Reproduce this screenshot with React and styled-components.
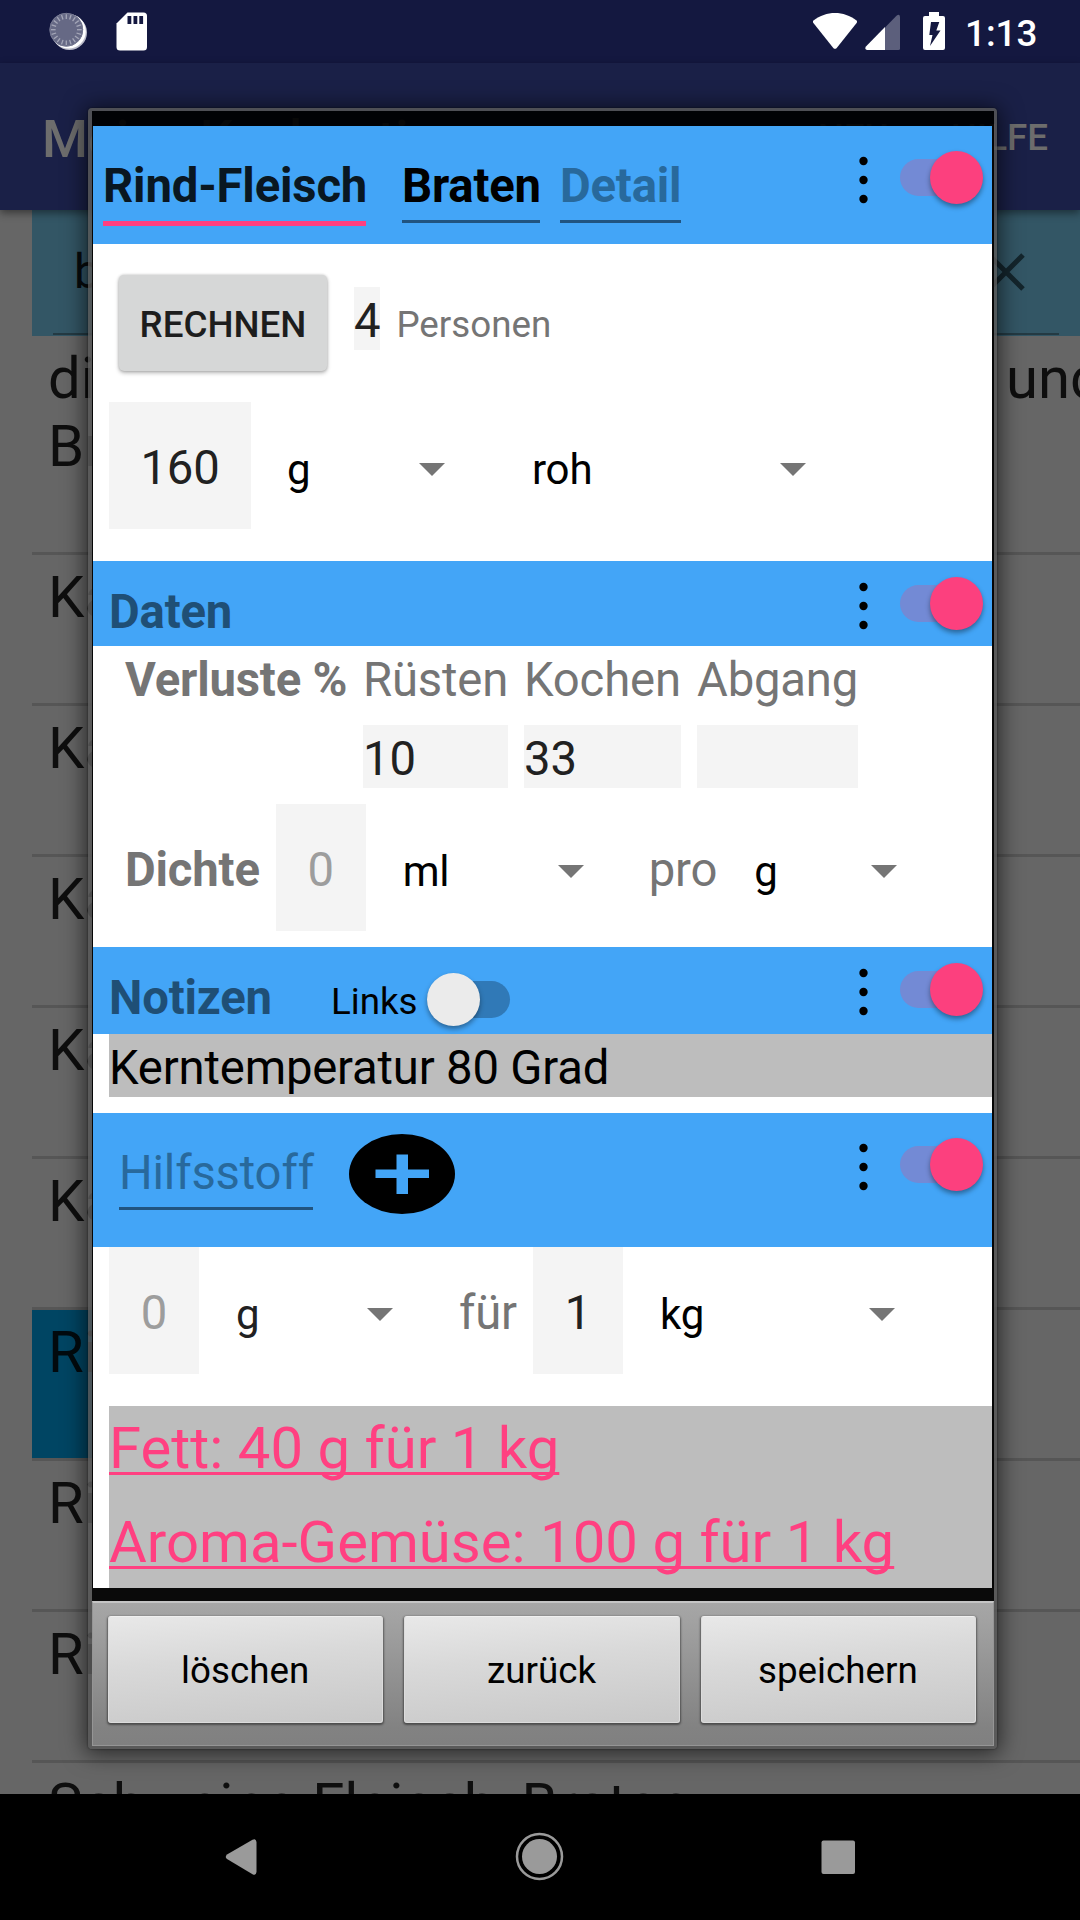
import React from "react";
import styled, { createGlobalStyle, css } from "styled-components";

const GlobalStyle = createGlobalStyle`
  html, body { margin: 0; padding: 0; background: #000; }
  body { font-family: Roboto, "Noto Sans", sans-serif; width: 1080px; height: 1920px; overflow: hidden; }
  *, *::before, *::after { box-sizing: border-box; }
`;

const BLUE = "#43a5f7";
const PINK = "#ff4081";

/* ---------- type ---------- */
const sizes = {
  button: css`font-size: 36.75px; line-height: 43px;`,
  spinner: css`font-size: 42px; line-height: 49px; letter-spacing: -0.2px;`,
  body: css`font-size: 47.25px; line-height: 56px; letter-spacing: -0.18px;`,
  title: css`font-size: 52.5px; line-height: 62px;`,
  large: css`font-size: 58px; line-height: 68px; letter-spacing: 0.03px;`,
};

const Text = styled.span`
  ${(p) => sizes[p.$size || "body"]}
  font-weight: ${(p) => p.$weight || 400};
  color: ${(p) => p.$color || "#000"};
  white-space: nowrap;
  margin-left: ${(p) => p.$ml || 0}px;
`;

/* ---------- screen ---------- */
const Screen = styled.div`
  position: relative;
  display: flex;
  flex-direction: column;
  width: 1080px;
  height: 1920px;
  overflow: hidden;
  background: #666;
`;

const StatusBar = styled.div`
  display: flex;
  flex: none;
  height: 63px;
  background: #141840;
`;

const Clock = styled.span`
  font-size: 36.75px;
  line-height: 43px;
  font-weight: 500;
  color: #fff;
  margin: 12px 0 0 19px;
`;

const AppBar = styled.header`
  position: relative;
  z-index: 1;
  display: flex;
  flex: none;
  justify-content: space-between;
  align-items: flex-start;
  height: 147px;
  padding: 45px 32px 0 42px;
  background: #1a2047;
  box-shadow: 0 3px 8px rgba(0, 0, 0, 0.45);
`;

const Actions = styled.div`
  display: flex;
  gap: 62px;
  padding-top: 8px;
`;

const SearchBox = styled.div`
  display: flex;
  flex: none;
  height: 126px;
  margin-left: 32px;
  padding: 0 21px 1px;
  background: #335665;
`;

const SearchField = styled.div`
  display: flex;
  flex: 1;
  justify-content: space-between;
  align-items: center;
  padding: 0 33px 0 21px;
  border-bottom: 2px solid #243a43;
`;

const List = styled.div`
  flex: 1;
  min-height: 0;
  overflow: hidden;
  padding-left: 32px;
`;

const ListItem = styled.div`
  display: flex;
  height: ${(p) => p.$height || 151}px;
  border-bottom: 3px solid #565656;
`;

const ItemLabel = styled.div`
  display: flex;
  flex-direction: column;
  flex: none;
  width: 960px;
  padding: 8px 0 0 16px;
  background: ${(p) => (p.$selected ? "#004563" : "transparent")};
  ${ListItem}:last-child & { padding-top: 7px; }
`;

const ItemTail = styled.div`
  padding-top: 8px;
  margin-left: 14px;
`;

const NavBar = styled.nav`
  display: flex;
  flex: none;
  height: 126px;
  background: #000;
`;

/* ---------- dialog ---------- */
const Dialog = styled.section`
  position: absolute;
  z-index: 2;
  left: 88px;
  top: 108px;
  width: 909px;
  height: 1641px;
  display: flex;
  flex-direction: column;
  border: solid rgba(88, 88, 88, 0.85);
  border-width: 3px 3px 3px 4px;
  border-radius: 4px;
  box-shadow: 0 2px 22px 3px rgba(0, 0, 0, 0.6), 0 0 2px rgba(0, 0, 0, 0.6);
`;

const TopStrip = styled.div`
  flex: none;
  height: 15px;
  background: rgba(0, 0, 0, 0.93);
`;

const Content = styled.div`
  display: flex;
  flex-direction: column;
  flex: none;
  height: 1462px;
  border: solid #060606;
  border-width: 0 2px 0 1px;
  background: #fff;
`;

const Divider = styled.div`
  flex: none;
  height: 13px;
  background: #0a0a0a;
`;

const SectionHeader = styled.div`
  display: flex;
  flex: none;
  align-items: flex-start;
  height: ${(p) => p.$height}px;
  background: ${BLUE};
`;

const HeaderMain = styled.div`
  display: flex;
  align-items: baseline;
  padding: ${(p) => p.$top}px 0 0 ${(p) => p.$left}px;
`;

const Field = styled.div`
  width: ${(p) => p.$width}px;
  height: ${(p) => (p.$active ? 68 : 65)}px;
  margin-right: ${(p) => p.$mr || 0}px;
  border-bottom: ${(p) => (p.$active ? `5px solid ${PINK}` : "3px solid #215480")};
  white-space: nowrap;
`;

const Controls = styled.div`
  display: flex;
  align-items: center;
  gap: 32.5px;
  margin: ${(p) => p.$top}px 9px 0 auto;
`;

const Track = styled.div`
  position: relative;
  width: 83px;
  height: 37px;
  border-radius: 19px;
  background: ${(p) => (p.$on ? "#738ad5" : "#3079b7")};
  &::after {
    content: "";
    position: absolute;
    top: -8px;
    ${(p) => (p.$on ? "right: 0;" : "left: 0;")}
    width: 53px;
    height: 53px;
    border-radius: 50%;
    background: ${(p) => (p.$on ? "#fc407e" : "#ebebeb")};
    box-shadow: 0 3px 5px rgba(0, 0, 0, 0.38);
  }
`;

const LinksSwitch = styled.div`
  display: flex;
  align-items: center;
  gap: 9px;
  margin-left: 59px;
  ${Track} { margin-bottom: 4px; }
`;

const Row = styled.div`
  display: flex;
  flex: none;
  align-items: baseline;
  height: ${(p) => p.$height}px;
  padding: ${(p) => p.$top || 0}px 0 0 ${(p) => p.$left || 16}px;
`;

const RaisedButton = styled.button`
  width: 208px;
  height: 96px;
  padding: 3px 0 0;
  border: 0;
  border-radius: 5px;
  background: #d6d7d7;
  box-shadow: 0 2px 4px rgba(0, 0, 0, 0.28), 0 0 3px rgba(0, 0, 0, 0.2);
  font: 500 36.75px/43px Roboto, sans-serif;
  color: #1d1d1d;
`;

const SmallBox = styled.div`
  height: 63px;
  margin-left: ${(p) => p.$ml || 0}px;
  padding-top: 6px;
  background: #f4f4f4;
`;

const AmountBox = styled.div`
  flex: none;
  width: ${(p) => p.$width}px;
  height: 127px;
  margin-left: ${(p) => p.$ml || 0}px;
  padding-top: 38px;
  text-align: center;
  background: #f4f4f4;
`;

const SpinnerBox = styled.div`
  display: flex;
  flex: none;
  align-items: center;
  justify-content: space-between;
  width: ${(p) => p.$width}px;
  margin-left: ${(p) => p.$ml}px;
`;

const LossTable = styled.div`
  display: grid;
  flex: none;
  grid-template-columns: 222px 145px 157px 161px;
  grid-template-rows: 56px 63px;
  column-gap: 16px;
  row-gap: 17px;
  height: 158px;
  padding: 6px 0 0 32px;
`;

const Note = styled.div`
  flex: none;
  height: 63px;
  margin: 0 0 16px 16px;
  padding-top: 6px;
  background: #bdbdbd;
`;

const Ingredients = styled.ul`
  flex: none;
  height: 182px;
  margin: 0 0 0 16px;
  padding: 8px 0 0;
  list-style: none;
  background: #bdbdbd;
`;

const Ingredient = styled.li`
  ${sizes.large}
  height: 94px;
  color: ${PINK};
  text-decoration: underline;
  text-decoration-thickness: 3px;
  text-underline-offset: 4px;
  text-decoration-skip-ink: none;
`;

const ButtonBar = styled.footer`
  display: flex;
  flex: 1;
  gap: 21px;
  align-items: flex-start;
  padding: 13px 17px 0 15px;
  border: 1px solid #959595;
  border-top: 2px solid #c4c4c4;
  background: linear-gradient(#a6a6a6, #a2a2a2 12%, #828282 88%, #808080);
`;

const DialogButton = styled.button`
  flex: 1;
  height: 107px;
  padding: 1px 1px 0 0;
  border: 1px solid #dcdcdc;
  border-top-color: #f0f0f0;
  border-radius: 3px;
  background: linear-gradient(175deg, #e8e8e8, #d9d9d9 40%, #c8c8c8);
  box-shadow: 0 1px 2px 1px rgba(0, 0, 0, 0.42);
  font: 400 36.75px/43px Roboto, sans-serif;
  color: #000;
`;

/* ---------- icons ---------- */
const rays = Array.from({ length: 20 }, (_, i) => i * 18);

const LeftStatusIcons = () => (
  <svg width="800" height="63" viewBox="0 0 800 63">
    <circle cx="69.500" cy="32.500" r="17.500" fill="#b9bac8" />
    <circle cx="68.500" cy="31.300" r="17.300" fill="#fff" />
    <circle cx="66.300" cy="29.700" r="16.800" fill="#666985" />
    <circle cx="66.300" cy="29.700" r="16.400" fill="none" stroke="#777a93" strokeWidth="1" />
    {rays.map((a) => (
      <line key={a} x1="66.300" y1="14.300" x2="66.300" y2="19" stroke="#a5a7b8" strokeWidth="1.300" transform={`rotate(${a} 66.3 29.7)`} />
    ))}
    <path fill="#fff" d="M127.500 12.500H143.500a3.500 3.500 0 0 1 3.500 3.500V47a3.500 3.500 0 0 1-3.500 3.500H120a3.500 3.500 0 0 1-3.500-3.500V23.500Z" />
    <path fill="#141840" d="M127.500 16h3.800v8h-3.800ZM133.500 16h3.800v8h-3.800ZM139.300 16h3.800v8h-3.800Z" />
  </svg>
);

const RightStatusIcons = () => (
  <svg width="146" height="63" viewBox="800 0 146 63">
    <path fill="#fff" d="M813.500 20.500C826 10.500 844 10.500 856.500 20.500Q857.500 21.500 856.800 22.800L836.500 48.200Q835 49.500 833.500 48.200L813.200 22.800Q812.500 21.500 813.500 20.500Z" />
    <path fill="#5c5f7c" d="M885 27.500 896.500 15.700Q899.800 13.500 900 17V48.500Q900 50 898.500 50H885Z" />
    <path fill="#fff" d="M885 27V50H867Q864.500 49.500 865.700 46.800Z" />
    <path fill="#fff" d="M929 12h10v4h4a2 2 0 0 1 2 2V48a2 2 0 0 1-2 2H925a2 2 0 0 1-2-2V18a2 2 0 0 1 2-2h4Z" />
    <path fill="#141840" d="M931 22H939.300L936.300 30.500H940.500L930 46 932.500 35H929.300Z" />
  </svg>
);

const CloseIcon = () => (
  <svg width="40" height="40" viewBox="0 0 40 40">
    <path d="M3 3 37 37M37 3 3 37" stroke="#14252c" strokeWidth="5" />
  </svg>
);

const DotsSvg = styled.svg`
  margin-top: 6px;
`;

const Dots = () => (
  <DotsSvg width="9" height="48" viewBox="0 0 9 48">
    <circle cx="4.500" cy="5" r="4.200" />
    <circle cx="4.500" cy="24" r="4.200" />
    <circle cx="4.500" cy="43" r="4.200" />
  </DotsSvg>
);

const Arrow = () => (
  <svg width="26" height="13" viewBox="0 0 26 13">
    <path d="M0 0H26L13 13Z" fill="#757575" />
  </svg>
);

const AddIcon = () => (
  <svg width="106" height="80" viewBox="0 0 106 80">
    <ellipse cx="53" cy="40" rx="53" ry="40" />
    <path d="M47.500 20.500h11.500v15H80v8.500H59v16H47.500v-16H26.500v-8.500H47.500Z" fill={BLUE} />
  </svg>
);

const AddButton = styled.button`
  display: flex;
  align-self: flex-start;
  padding: 0;
  border: 0;
  background: none;
  margin: -11px 0 0 36px;
`;

const NavIcons = () => (
  <svg width="1080" height="126" viewBox="0 0 1080 126">
    <path d="M227 60.500 252.500 45.700Q256 44 256.500 48V78Q256 82 252.500 80.300L227 65Q224.500 63 227 60.500Z" fill="#9a9a9a" />
    <circle cx="539.500" cy="62.500" r="22.500" fill="none" stroke="#9a9a9a" strokeWidth="2.500" />
    <circle cx="539.500" cy="62.500" r="17.500" fill="#9a9a9a" />
    <rect x="821.500" y="46.500" width="33.500" height="33.500" rx="2" fill="#9a9a9a" />
  </svg>
);

/* ---------- parts ---------- */
const HeaderControls = ({ top }) => (
  <Controls $top={top}>
    <Dots />
    <Track $on />
  </Controls>
);

const Spinner = ({ value, width, ml, color }) => (
  <SpinnerBox $width={width} $ml={ml}>
    <Text $size="spinner" $color={color}>{value}</Text>
    <Arrow />
  </SpinnerBox>
);

const GREY = "#757575";
const INK = "#212121";
const HINT = "#9d9d9d";
const HEAD = "#1f4f76";
const HEAD_HINT = "#28699c";
const DIM = "#0e0e0e";

const items = [
  { label: "Ka" },
  { label: "Ka" },
  { label: "Ka" },
  { label: "Ka" },
  { label: "Ka" },
  { label: "Ri", selected: true },
  { label: "Ri" },
  { label: "Ri" },
  { label: "Schweine-Fleisch, Braten" },
];

export default function App() {
  return (
    <Screen>
      <GlobalStyle />
      <StatusBar>
        <LeftStatusIcons />
        <RightStatusIcons />
        <Clock>1:13</Clock>
      </StatusBar>
      <AppBar>
        <Text $size="title" $weight={500} $color="#6d6d6d">Meine Kochnotizen</Text>
        <Actions>
          <Text $size="button" $weight={500} $color="#6d6d6d">NEU</Text>
          <Text $size="button" $weight={500} $color="#6d6d6d">HILFE</Text>
        </Actions>
      </AppBar>
      <SearchBox>
        <SearchField>
          <Text $color="#070b0d">b</Text>
          <CloseIcon />
        </SearchField>
      </SearchBox>
      <List>
        <ListItem $height={219}>
          <ItemLabel>
            <Text $size="large" $color={DIM}>di</Text>
            <Text $size="large" $color={DIM}>Br</Text>
          </ItemLabel>
          <ItemTail>
            <Text $size="large" $color={DIM}>und</Text>
          </ItemTail>
        </ListItem>
        {items.map((item, i) => (
          <ListItem key={i}>
            <ItemLabel $selected={item.selected}>
              <Text $size="large" $color={item.selected ? "#020a0e" : DIM}>{item.label}</Text>
            </ItemLabel>
          </ListItem>
        ))}
      </List>
      <NavBar>
        <NavIcons />
      </NavBar>

      <Dialog>
        <TopStrip />
        <Content>
          <SectionHeader $height={118}>
            <HeaderMain $top={32} $left={10}>
              <Field $width={263} $mr={36} $active>
                <Text $weight={700} $color="#091722">Rind-Fleisch</Text>
              </Field>
              <Field $width={138} $mr={20}>
                <Text $weight={700}>Braten</Text>
              </Field>
              <Field $width={121}>
                <Text $weight={700} $color={HEAD_HINT}>Detail</Text>
              </Field>
            </HeaderMain>
            <HeaderControls top={24} />
          </SectionHeader>

          <Row $height={158} $top={31} $left={26}>
            <RaisedButton>RECHNEN</RaisedButton>
            <SmallBox $ml={27}><Text $color={INK}>4</Text></SmallBox>
            <Text $size="button" $color={GREY} $ml={16}>Personen</Text>
          </Row>
          <Row $height={159}>
            <AmountBox $width={142}><Text $color={INK}>160</Text></AmountBox>
            <Spinner value="g" width={158} ml={36} />
            <Spinner value="roh" width={274} ml={87} />
          </Row>

          <SectionHeader $height={85}>
            <HeaderMain $top={23} $left={16}>
              <Text $weight={700} $color={HEAD}>Daten</Text>
            </HeaderMain>
            <HeaderControls top={15} />
          </SectionHeader>
          <LossTable>
            <Text $weight={700} $color={GREY}>Verluste %</Text>
            <Text $color={GREY}>Rüsten</Text>
            <Text $color={GREY}>Kochen</Text>
            <Text $color={GREY}>Abgang</Text>
            <span />
            <SmallBox><Text $color={INK}>10</Text></SmallBox>
            <SmallBox><Text $color={INK}>33</Text></SmallBox>
            <SmallBox />
          </LossTable>
          <Row $height={143} $left={32}>
            <Text $weight={700} $color={GREY}>Dichte</Text>
            <AmountBox $width={90} $ml={16}><Text $color={HINT}>0</Text></AmountBox>
            <Spinner value="ml" width={181} ml={37} />
            <Text $color={GREY} $ml={65}>pro</Text>
            <Spinner value="g" width={143} ml={37} />
          </Row>

          <SectionHeader $height={87}>
            <HeaderMain $top={23} $left={16}>
              <Text $weight={700} $color={HEAD}>Notizen</Text>
              <LinksSwitch>
                <Text $size="button">Links</Text>
                <Track />
              </LinksSwitch>
            </HeaderMain>
            <HeaderControls top={15} />
          </SectionHeader>
          <Note><Text>Kerntemperatur 80 Grad</Text></Note>

          <SectionHeader $height={134}>
            <HeaderMain $top={32} $left={26}>
              <Field $width={194}>
                <Text $color={HEAD_HINT}>Hilfsstoff</Text>
              </Field>
              <AddButton><AddIcon /></AddButton>
            </HeaderMain>
            <HeaderControls top={24} />
          </SectionHeader>
          <Row $height={159}>
            <AmountBox $width={90}><Text $color={HINT}>0</Text></AmountBox>
            <Spinner value="g" width={157} ml={37} color={INK} />
            <Text $color={GREY} $ml={66}>für</Text>
            <AmountBox $width={90} $ml={16}><Text $color={INK}>1</Text></AmountBox>
            <Spinner value="kg" width={235} ml={37} />
          </Row>
          <Ingredients>
            <Ingredient>Fett: 40 g für 1 kg</Ingredient>
            <Ingredient>Aroma-Gemüse: 100 g für 1 kg</Ingredient>
          </Ingredients>
        </Content>
        <Divider />
        <ButtonBar>
          <DialogButton>löschen</DialogButton>
          <DialogButton>zurück</DialogButton>
          <DialogButton>speichern</DialogButton>
        </ButtonBar>
      </Dialog>
    </Screen>
  );
}
